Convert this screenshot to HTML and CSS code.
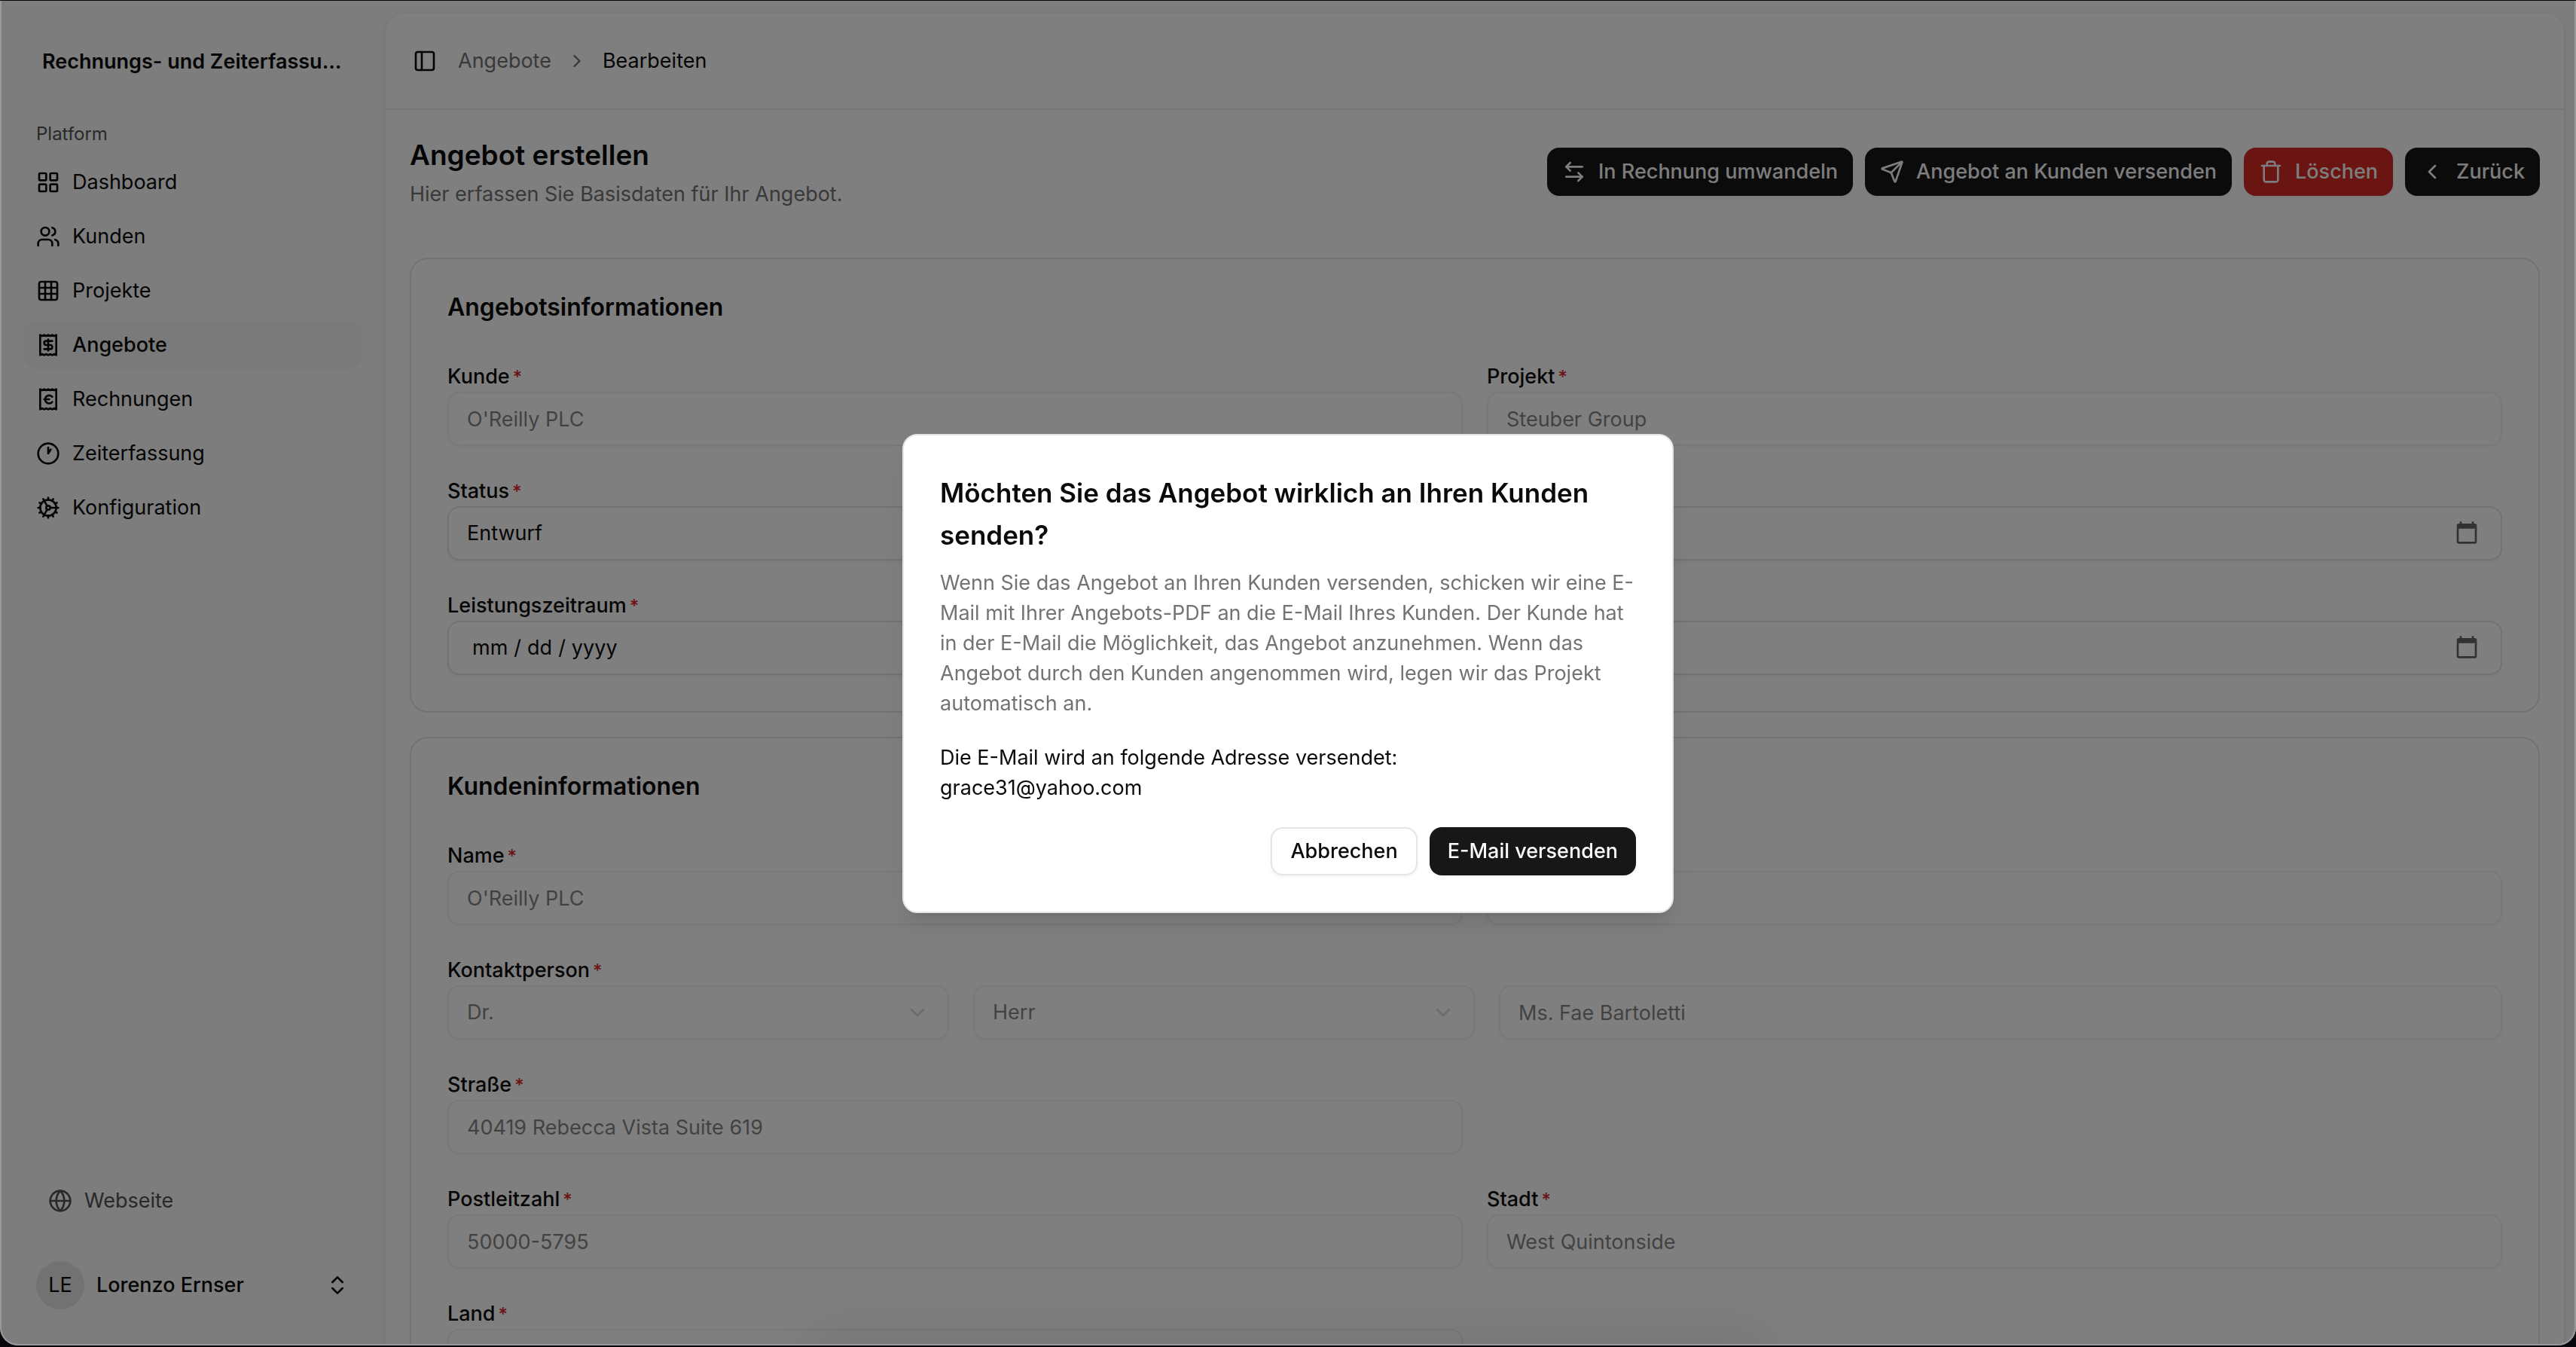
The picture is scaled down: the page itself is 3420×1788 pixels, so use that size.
FILE: index.html
```html
<!DOCTYPE html>
<html lang="de">
<head>
<meta charset="utf-8">
<meta name="viewport" content="width=device-width, initial-scale=1">
<title>Angebot erstellen</title>
<link rel="stylesheet" href="styles.css">
</head>
<body>
<div class="app">
  <aside class="sidebar">
    <div class="brand">Rechnungs- und Zeiterfassu...</div>
    <div class="group-label">Platform</div>
    <nav class="menu">
      <a class="menu-item" href="#"><svg class="icon" viewBox="0 0 24 24"><rect width="7" height="7" x="3" y="3" rx="1"/><rect width="7" height="7" x="14" y="3" rx="1"/><rect width="7" height="7" x="14" y="14" rx="1"/><rect width="7" height="7" x="3" y="14" rx="1"/></svg>Dashboard</a>
      <a class="menu-item" href="#"><svg class="icon" viewBox="0 0 24 24"><path d="M16 21v-2a4 4 0 0 0-4-4H6a4 4 0 0 0-4 4v2"/><circle cx="9" cy="7" r="4"/><path d="M22 21v-2a4 4 0 0 0-3-3.87"/><path d="M16 3.13a4 4 0 0 1 0 7.75"/></svg>Kunden</a>
      <a class="menu-item" href="#"><svg class="icon" viewBox="0 0 24 24"><rect width="18" height="18" x="3" y="3" rx="2"/><path d="M3 9h18M3 15h18M9 3v18M15 3v18"/></svg>Projekte</a>
      <a class="menu-item menu-item-active" href="#"><svg class="icon" viewBox="0 0 24 24"><path d="M4 2v20l2-1 2 1 2-1 2 1 2-1 2 1 2-1 2 1V2l-2 1-2-1-2 1-2-1-2 1-2-1-2 1Z"/><path d="M16 8h-6a2 2 0 1 0 0 4h4a2 2 0 1 1 0 4H8"/><path d="M12 17.5v-11"/></svg>Angebote</a>
      <a class="menu-item" href="#"><svg class="icon" viewBox="0 0 24 24"><path d="M4 2v20l2-1 2 1 2-1 2 1 2-1 2 1 2-1 2 1V2l-2 1-2-1-2 1-2-1-2 1-2-1-2 1Z"/><path d="M8 12h5"/><path d="M16 9.5a4 4 0 1 0 0 5.2"/></svg>Rechnungen</a>
      <a class="menu-item" href="#"><svg class="icon" viewBox="0 0 24 24"><circle cx="12" cy="12" r="10"/><path d="M12 6v6l2.500-4"/></svg>Zeiterfassung</a>
      <a class="menu-item" href="#"><svg class="icon" viewBox="0 0 24 24"><circle cx="12" cy="12" r="8"/><circle cx="12" cy="12" r="2"/><path d="M12 2v2M12 22v-2M17 20.660l-1-1.730M11 10.270 7 3.340M20.660 17l-1.730-1M3.340 7l1.730 1M14 12h8M2 12h2M20.660 7l-1.730 1M3.340 17l1.730-1M17 3.340l-1 1.730M11 13.730l-4 6.930"/></svg>Konfiguration</a>
    </nav>
    <div class="sidebar-foot">
      <a class="site-link" href="#"><svg class="icon" viewBox="0 0 24 24"><circle cx="12" cy="12" r="10"/><path d="M12 2a14.500 14.500 0 0 0 0 20 14.500 14.500 0 0 0 0-20"/><path d="M2 12h20"/></svg>Webseite</a>
      <button class="user" type="button">
        <span class="avatar">LE</span>
        <span class="user-name">Lorenzo Ernser</span>
        <svg class="icon" viewBox="0 0 24 24"><path d="m7 15 5 5 5-5"/><path d="m7 9 5-5 5 5"/></svg>
      </button>
    </div>
  </aside>

  <main class="inset">
    <header class="topbar">
      <button class="icon-button" type="button" aria-label="Sidebar"><svg class="icon" viewBox="0 0 24 24"><rect width="18" height="18" x="3" y="3" rx="2"/><path d="M9 3v18"/></svg></button>
      <nav class="crumbs">
        <a href="#">Angebote</a>
        <svg class="icon" viewBox="0 0 24 24"><path d="m9 18 6-6-6-6"/></svg>
        <span class="crumb-current">Bearbeiten</span>
      </nav>
    </header>

    <div class="content">
      <div class="page-head">
        <div>
          <h1>Angebot erstellen</h1>
          <p class="subtitle">Hier erfassen Sie Basisdaten für Ihr Angebot.</p>
        </div>
        <div class="actions">
          <button class="btn btn-primary" type="button"><svg class="icon" viewBox="0 0 24 24"><path d="M8 3 4 7l4 4"/><path d="M4 7h16"/><path d="m16 21 4-4-4-4"/><path d="M20 17H4"/></svg>In Rechnung umwandeln</button>
          <button class="btn btn-primary" type="button"><svg class="icon" viewBox="0 0 24 24"><path d="M14.536 21.686a.5.5 0 0 0 .937-.024l6.500-19a.496.496 0 0 0-.635-.635l-19 6.500a.5.5 0 0 0-.024.937l7.930 3.180a2 2 0 0 1 1.112 1.110z"/><path d="m21.854 2.147-10.940 10.939"/></svg>Angebot an Kunden versenden</button>
          <button class="btn btn-danger" type="button"><svg class="icon" viewBox="0 0 24 24"><path d="M3 6h18"/><path d="M19 6v14c0 1-1 2-2 2H7c-1 0-2-1-2-2V6"/><path d="M8 6V4c0-1 1-2 2-2h4c1 0 2 1 2 2v2"/></svg>Löschen</button>
          <button class="btn btn-primary" type="button"><svg class="icon" viewBox="0 0 24 24"><path d="m15 18-6-6 6-6"/></svg>Zurück</button>
        </div>
      </div>

      <section class="card">
        <h2>Angebotsinformationen</h2>
        <div class="grid">
          <div class="field">
            <label for="kunde">Kunde<span class="req">*</span></label>
            <input id="kunde" class="control" type="text" value="O'Reilly PLC" disabled>
          </div>
          <div class="field">
            <label for="projekt">Projekt<span class="req">*</span></label>
            <input id="projekt" class="control" type="text" value="Steuber Group" disabled>
          </div>
          <div class="field">
            <label for="status">Status<span class="req">*</span></label>
            <select id="status" class="control"><option>Entwurf</option></select>
          </div>
          <div class="field">
            <input class="control" type="date" aria-label="Datum">
          </div>
          <div class="field">
            <label for="von">Leistungszeitraum<span class="req">*</span></label>
            <input id="von" class="control" type="date">
          </div>
          <div class="field">
            <input class="control" type="date" aria-label="Leistungszeitraum bis">
          </div>
        </div>
      </section>

      <section class="card">
        <h2>Kundeninformationen</h2>
        <div class="grid">
          <div class="field">
            <label for="name">Name<span class="req">*</span></label>
            <input id="name" class="control" type="text" value="O'Reilly PLC" disabled>
          </div>
          <div class="field">
            <input class="control" type="text" aria-label="Zusatz" disabled>
          </div>
          <div class="field field-wide">
            <label for="titel">Kontaktperson<span class="req">*</span></label>
            <div class="contact-row">
              <div class="select">
                <select id="titel" class="control" disabled><option>Dr.</option></select>
                <svg class="icon" viewBox="0 0 24 24"><path d="m6 9 6 6 6-6"/></svg>
              </div>
              <div class="select">
                <select class="control" aria-label="Anrede" disabled><option>Herr</option></select>
                <svg class="icon" viewBox="0 0 24 24"><path d="m6 9 6 6 6-6"/></svg>
              </div>
              <input class="control" type="text" aria-label="Ansprechpartner" value="Ms. Fae Bartoletti" disabled>
            </div>
          </div>
          <div class="field field-start">
            <label for="strasse">Straße<span class="req">*</span></label>
            <input id="strasse" class="control" type="text" value="40419 Rebecca Vista Suite 619" disabled>
          </div>
          <div class="field field-start">
            <label for="plz">Postleitzahl<span class="req">*</span></label>
            <input id="plz" class="control" type="text" value="50000-5795" disabled>
          </div>
          <div class="field">
            <label for="stadt">Stadt<span class="req">*</span></label>
            <input id="stadt" class="control" type="text" value="West Quintonside" disabled>
          </div>
          <div class="field field-start">
            <label for="land">Land<span class="req">*</span></label>
            <input id="land" class="control" type="text" disabled>
          </div>
        </div>
      </section>
    </div>
  </main>
</div>

<div class="overlay"></div>
<div class="dock-shadow"></div>
<div class="window-edge"></div>

<dialog class="dialog" open aria-labelledby="dialog-title">
  <h2 id="dialog-title">Möchten Sie das Angebot wirklich an Ihren Kunden senden?</h2>
  <p class="dialog-text">Wenn Sie das Angebot an Ihren Kunden versenden, schicken wir eine E-<wbr>Mail mit Ihrer Angebots-PDF an die E-Mail Ihres Kunden. Der Kunde hat in der E-Mail die Möglichkeit, das Angebot anzunehmen. Wenn das Angebot durch den Kunden angenommen wird, legen wir das Projekt automatisch an.</p>
  <p class="dialog-address">Die E-Mail wird an folgende Adresse versendet:<br>grace31@yahoo.com</p>
  <div class="dialog-actions">
    <button class="btn btn-outline" type="button">Abbrechen</button>
    <button class="btn btn-primary btn-text" type="button">E-Mail versenden</button>
  </div>
</dialog>
</body>
</html>
```
FILE: styles.css
```css
:root {
  --ink: #0a0a0a;
  --muted: #737373;
  --border: #e5e5e5;
  --primary: #171717;
  --danger: #d42a22;
}

* {
  box-sizing: border-box;
}

body {
  margin: 0;
  height: 100vh;
  overflow: hidden;
  background: #fafafa;
  color: var(--ink);
  font: 400 27px/40px Inter, "Liberation Sans", sans-serif;
}

h1, h2, p {
  margin: 0;
}

a {
  color: inherit;
  text-decoration: none;
}

button, input, select {
  font: inherit;
  color: inherit;
}

.icon {
  width: 32px;
  height: 32px;
  flex: none;
  fill: none;
  stroke: currentColor;
  stroke-width: 2;
  stroke-linecap: round;
  stroke-linejoin: round;
}

.app {
  display: grid;
  grid-template-columns: 512px minmax(0, 1fr);
  grid-template-rows: minmax(0, 1fr);
  height: 100vh;
  padding-top: 2px;
}

/* Sidebar */

.sidebar {
  display: flex;
  flex-direction: column;
  min-height: 0;
  padding: 48px 32px 34px;
}

.brand {
  padding: 0 24px;
  line-height: 64px;
  font-weight: 600;
  white-space: nowrap;
}

.group-label {
  margin-top: 32px;
  padding: 0 16px;
  font-size: 24px;
  line-height: 64px;
  color: #525252;
}

.menu {
  display: flex;
  flex-direction: column;
  gap: 8px;
}

.menu-item {
  display: flex;
  align-items: center;
  gap: 16px;
  height: 64px;
  padding: 0 16px;
  border-radius: 16px;
}

.menu-item-active {
  background: #f4f4f4;
  font-weight: 500;
}

.sidebar-foot {
  display: flex;
  flex-direction: column;
  gap: 32px;
  margin-top: auto;
}

.site-link {
  display: flex;
  align-items: center;
  gap: 16px;
  height: 64px;
  padding: 0 32px;
  color: #525252;
}

.user {
  display: flex;
  align-items: center;
  gap: 16px;
  height: 96px;
  padding: 0 16px;
  border: 0;
  background: none;
  text-align: left;
}

.avatar {
  display: grid;
  place-items: center;
  width: 64px;
  height: 64px;
  border-radius: 50%;
  background: var(--border);
}

.user-name {
  flex: 1;
  font-weight: 500;
}

/* Main panel */

.inset {
  overflow: hidden;
  margin: 16px 16px 0 0;
  border-radius: 24px 24px 0 0;
  background: #fff;
  box-shadow: 0 2px 6px rgba(0, 0, 0, 0.1);
}

.topbar {
  display: flex;
  align-items: center;
  gap: 28px;
  height: 128px;
  padding: 0 36px;
  border-bottom: 2px solid #efefef;
}

.icon-button {
  display: grid;
  padding: 0;
  border: 0;
  background: none;
}

.crumbs {
  display: flex;
  align-items: center;
  gap: 20px;
  color: var(--muted);
}

.crumbs .icon {
  width: 28px;
  height: 28px;
}

.crumb-current {
  color: var(--ink);
}

.content {
  display: flex;
  flex-direction: column;
  gap: 32px;
  padding: 32px;
}

.page-head {
  display: flex;
  align-items: center;
  justify-content: space-between;
  margin-bottom: 32px;
}

h1 {
  margin-bottom: 4px;
  font-size: 37px;
  line-height: 56px;
  font-weight: 600;
}

.subtitle {
  color: var(--muted);
}

.actions {
  display: flex;
  gap: 16px;
}

.btn {
  display: flex;
  align-items: center;
  gap: 16px;
  height: 64px;
  padding: 0 20px;
  border: 0;
  border-radius: 16px;
  font-weight: 500;
  white-space: nowrap;
  box-shadow: 0 2px 4px rgba(0, 0, 0, 0.05);
}

.btn-primary {
  background: var(--primary);
  color: #fafafa;
}

.btn-danger {
  background: var(--danger);
  color: #fafafa;
}

.btn-outline {
  padding: 0 24px;
  border: 2px solid var(--border);
  background: #fff;
}

.btn-text {
  padding: 0 24px;
}

.card {
  padding: 48px;
  border: 2px solid var(--border);
  border-radius: 24px;
}

.card h2 {
  margin-bottom: 56px;
  font-size: 32px;
  line-height: 32px;
  font-weight: 600;
}

.grid {
  display: grid;
  grid-template-columns: 1fr 1fr;
  gap: 40px 32px;
}

.field {
  display: flex;
  flex-direction: column;
  justify-content: flex-end;
}

.field-wide {
  grid-column: 1 / -1;
}

.field-start {
  grid-column: 1;
}

label {
  font-weight: 500;
}

.req {
  margin-left: 4px;
  font-size: 24px;
  line-height: 32px;
  color: #dc2626;
}

.control {
  width: 100%;
  height: 72px;
  padding: 0 24px;
  border: 2px solid var(--border);
  border-radius: 16px;
  background: transparent;
  box-shadow: 0 2px 4px rgba(0, 0, 0, 0.05);
  appearance: none;
}

.control:disabled {
  color: var(--ink);
  opacity: 0.5;
}

.control::-webkit-datetime-edit {
  padding: 0 6px;
}

.control::-webkit-datetime-edit-fields-wrapper {
  padding: 0;
}

.control::-webkit-datetime-edit-text {
  padding: 0 7px;
}

.control::-webkit-calendar-picker-indicator {
  width: 34px;
  height: 34px;
  margin: 0 4px 0 0;
  padding: 0;
  background-size: contain;
  opacity: 0.6;
}

.contact-row {
  display: grid;
  grid-template-columns: 1fr 1fr 2fr;
  gap: 32px;
}

.select {
  display: grid;
  align-items: center;
}

.select > * {
  grid-area: 1 / 1;
}

.select .icon {
  justify-self: end;
  margin-right: 26px;
  opacity: 0.15;
}

/* Layers above the page */

.overlay {
  position: fixed;
  inset: 0;
  background: rgba(0, 0, 0, 0.5);
}

.dock-shadow {
  position: fixed;
  inset: auto 0 -60px;
  width: 36%;
  height: 60px;
  margin: 0 auto;
  border-radius: 40px;
  box-shadow: 0 0 60px 30px rgba(0, 0, 0, 0.06);
}

.window-edge {
  position: fixed;
  inset: 1px 0 2px;
  border: 2px solid #999;
  border-top: 0;
  border-radius: 0 0 24px 24px;
  box-shadow: 0 0 0 30px #08080c;
  pointer-events: none;
}

.dialog {
  position: fixed;
  inset: 0;
  width: 1024px;
  max-width: calc(100% - 64px);
  height: fit-content;
  margin: auto;
  padding: 48px;
  border: 2px solid var(--border);
  border-radius: 20px;
  background: #fff;
  color: var(--ink);
  box-shadow: 0 20px 30px -6px rgba(0, 0, 0, 0.1), 0 8px 12px -8px rgba(0, 0, 0, 0.1);
}

.dialog h2 {
  margin-bottom: 16px;
  font-size: 35px;
  line-height: 56px;
  font-weight: 600;
}

.dialog-text {
  margin-bottom: 32px;
  color: var(--muted);
}

.dialog-actions {
  display: flex;
  justify-content: flex-end;
  gap: 16px;
  margin-top: 32px;
}
```
